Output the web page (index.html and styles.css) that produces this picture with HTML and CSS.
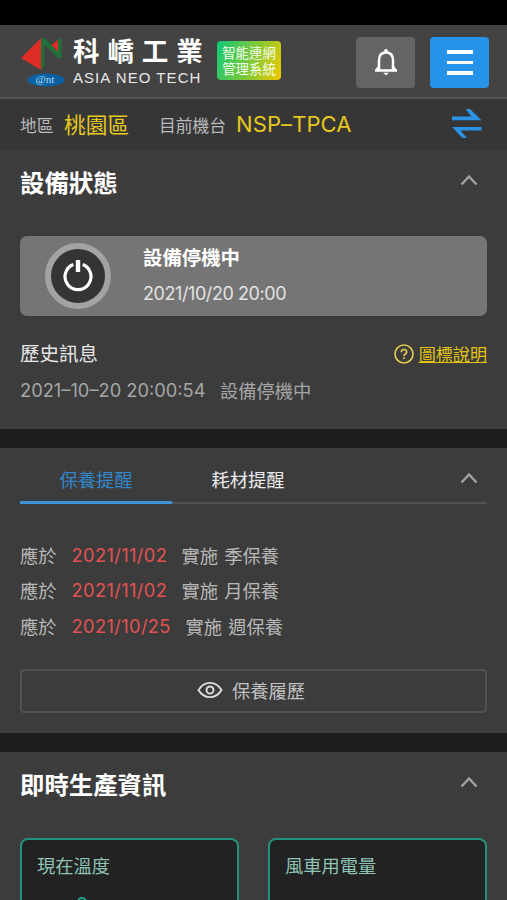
FILE: index.html
```html
<!DOCTYPE html>
<html lang="zh-Hant">
<head>
<meta charset="utf-8">
<meta name="viewport" content="width=device-width, initial-scale=1">
<title>科嶠工業 智能連網管理系統</title>
<link rel="stylesheet" href="styles.css">
</head>
<body>
<div class="status-bar"></div>
<header class="header">
  <svg class="logo" width="46" height="52" viewBox="0 0 46 52">
    <path d="M1 21 21 1v32z" fill="#dd2d27"/>
    <path d="M29 10 38 3v12.500z" fill="#dd2d27"/>
    <path d="M21 1.500h4L38 15V2h3.500v19H38L24.500 7.500V29L21 33z" fill="#20703a"/>
    <ellipse cx="26" cy="43" rx="18.500" ry="6.500" fill="#0862a5"/>
    <text class="logo-mark" x="15.500" y="46">@nt</text>
  </svg>
  <div class="brand">
    <div class="brand-zh">科嶠工業</div>
    <div class="brand-en">ASIA NEO TECH</div>
  </div>
  <div class="badge">智能連網<br>管理系統</div>
  <div class="actions">
    <button class="btn" aria-label="通知">
      <svg width="24" height="28" viewBox="0 0 24 28" fill="none" stroke="#fff" stroke-width="2.500">
        <path d="M1 22.500h22M5 22v-9.500C5 7.500 7.500 4.500 12 4.500s7 3 7 8V22M4.500 19l-2 3.500M19.500 19l2 3.500"/>
        <circle cx="12" cy="3" r="1.900" fill="#fff" stroke="none"/>
        <path d="M9.200 24.800h5.600L12 27.500z" fill="#fff" stroke="none"/>
      </svg>
    </button>
    <button class="btn btn-menu" aria-label="選單"><i></i><i></i><i></i></button>
  </div>
</header>
<div class="context">
  <span class="label">地區</span><span class="value area">桃園區</span>
  <span class="label machine-label">目前機台</span><span class="value machine">NSP–TPCA</span>
  <svg class="swap" width="32" height="30" viewBox="0 0 32 30" fill="#2a93e5">
    <path d="M2 7.500h19.500L15.500 0H20l11.500 11.200H2z"/>
    <path d="M2 18h29.500v3.500h-21l6.500 7.500h-4.500z"/>
  </svg>
</div>

<section class="panel panel-status">
  <div class="panel-head">
    <h2>設備狀態</h2>
    <svg class="chevron" width="18" height="12" viewBox="0 0 18 12"><path d="M1.500 10.500 9 2.500l7.500 8"/></svg>
  </div>
  <div class="state-card">
    <div class="power">
      <svg width="32" height="34" viewBox="0 0 32 34" fill="none" stroke="#fff">
        <path d="M11.300 6.600a13 13 0 1 0 9.400 0" stroke-width="3.200"/>
        <path d="M16 2v12" stroke-width="4.400"/>
      </svg>
    </div>
    <div class="state-text">
      <div class="state-name">設備停機中</div>
      <div class="state-time">2021/10/20 20:00</div>
    </div>
  </div>
  <div class="history-head">
    <span class="history-title">歷史訊息</span>
    <svg width="20" height="20" viewBox="0 0 20 20" fill="none" stroke="#dfcb4e" stroke-width="1.700">
      <circle cx="10" cy="10" r="9"/>
      <path d="M7.300 8.200C7.300 4.600 12.700 4.600 12.700 8c0 2-2.700 2-2.700 4"/>
      <path d="M10 13.200v1.800"/>
    </svg>
    <a class="legend">圖標說明</a>
  </div>
  <div class="history-row"><span class="history-time">2021–10–20 20:00:54</span><span class="history-msg">設備停機中</span></div>
</section>

<section class="panel panel-remind">
  <div class="tabs">
    <div class="tab tab-active">保養提醒</div>
    <div class="tab">耗材提醒</div>
    <svg class="chevron" width="18" height="12" viewBox="0 0 18 12"><path d="M1.500 10.500 9 2.500l7.500 8"/></svg>
  </div>
  <div class="rows">
    <div class="row"><span>應於</span><span class="date">2021/11/02</span><span class="task">實施</span><span>季保養</span></div>
    <div class="row"><span>應於</span><span class="date">2021/11/02</span><span class="task">實施</span><span>月保養</span></div>
    <div class="row"><span>應於</span><span class="date date-wide">2021/10/25</span><span class="task">實施</span><span>週保養</span></div>
  </div>
  <button class="log-btn">
    <svg width="26" height="18" viewBox="0 0 26 18" fill="none" stroke="#dcdcdc" stroke-width="1.900">
      <path d="M1.500 9C7-.500 19-.500 24.500 9 19 18.500 7 18.500 1.500 9z"/>
      <circle cx="13" cy="9" r="3.500"/>
    </svg>
    <span>保養履歷</span>
  </button>
</section>

<section class="panel panel-live">
  <div class="panel-head">
    <h2>即時生產資訊</h2>
    <svg class="chevron" width="18" height="12" viewBox="0 0 18 12"><path d="M1.500 10.500 9 2.500l7.500 8"/></svg>
  </div>
  <div class="cards">
    <div class="card"><span>現在溫度</span>
      <svg class="gauge" width="12" height="12" viewBox="0 0 12 12"><circle cx="6" cy="6" r="4" fill="none" stroke="#1aa88c" stroke-width="2"/></svg>
    </div>
    <div class="card"><span>風車用電量</span></div>
  </div>
</section>
</body>
</html>
```
FILE: styles.css
```css
* { box-sizing: border-box; }
html, body { height: 900px; overflow: hidden; }
body {
  margin: 0;
  background: #1d1d1d;
  color: #b9b9b9;
  font-family: Inter, "Noto Sans CJK TC", sans-serif;
  font-size: 18.3px;
  white-space: nowrap;
}
svg { display: block; flex: none; }
button { border: 0; padding: 0; font: inherit; color: inherit; }
.status-bar { height: 25px; background: #000; }
.header {
  height: 74px;
  display: flex;
  align-items: flex-start;
  padding: 12px 18px 0 20px;
  background: #434343;
  border-bottom: 2px solid #555;
}
.logo-mark { font: 11px "Liberation Serif", serif; fill: #b9d8ec; }
.brand { width: 133px; margin-left: 7px; color: #fff; }
.brand-zh {
  height: 31px;
  font-size: 26.5px;
  line-height: 29px;
  font-weight: 700;
  letter-spacing: 7.900px;
}
.brand-en {
  font: 15px/20px "Liberation Sans", sans-serif;
  letter-spacing: 1.05px;
  color: #e8e8e8;
}
.badge {
  width: 64px;
  height: 39px;
  margin: 4px 0 0 11px;
  padding-top: 5px;
  border-radius: 4px;
  background: linear-gradient(110deg, #12c878, #78c93c 50%, #f0c800);
  color: #f4ffe9;
  font-size: 13.4px;
  line-height: 15.5px;
  text-align: center;
}
.actions { display: flex; gap: 15px; margin-left: auto; }
.btn {
  width: 59px;
  height: 51px;
  border-radius: 4px;
  background: #646464;
  display: flex;
  align-items: center;
  justify-content: center;
}
.btn svg { margin-bottom: 2px; }
.btn-menu { background: #2693e9; flex-direction: column; gap: 7px; }
.btn-menu i { width: 26px; height: 3.500px; background: #fff; }
.context {
  height: 51px;
  display: flex;
  align-items: center;
  padding: 0 25px 2px 20px;
  background: #363636;
}
.label { width: 44px; font-size: 16.8px; padding-top: 2px; }
.machine-label { width: 77px; }
.value { color: #e6c71f; font-size: 21.7px; }
.area { width: 95px; }
.machine { font-size: 22px; letter-spacing: 0.1px; }
.swap { margin-left: auto; }
.panel { background: #3c3c3c; padding: 0 20px; }
.panel-status { height: 279px; margin-bottom: 19px; }
.panel-head { height: 86px; display: flex; justify-content: space-between; padding-right: 9px; }
h2 { margin: 15px 0 0; color: #fff; font-size: 24.4px; line-height: 36px; font-weight: 700; }
.chevron { fill: none; stroke: #a0a0a0; stroke-width: 2.500; margin-top: 24px; }
.state-card {
  height: 80px;
  display: flex;
  padding-left: 25px;
  align-items: center;
  border-radius: 7px;
  background: #757575;
}
.power {
  width: 66px;
  height: 66px;
  border: 6px solid #a3a3a3;
  border-radius: 50%;
  background: #343434;
  display: flex;
  align-items: center;
  justify-content: center;
}
.power svg { margin-bottom: 3px; }
.state-text { margin-left: 32px; }
.state-name { color: #fff; font-size: 19.4px; line-height: 30px; font-weight: 700; }
.state-time { color: #e2e2e2; font-size: 18px; line-height: 30px; margin-top: 6px; letter-spacing: -0.42px; }
.history-head { height: 37px; margin-top: 19px; display: flex; align-items: center; }
.history-title { color: #e6e6e6; font-size: 19.5px; margin: 0 auto 2px 0; }
.legend { margin-left: 5px; color: #e2c310; font-size: 17.100px; text-decoration: underline; }
.history-row { height: 36px; display: flex; align-items: center; color: #a5a5a5; }
.history-time { width: 200px; }
.panel-remind { height: 285px; margin-bottom: 19px; }
.tabs { height: 56px; display: flex; border-bottom: 2px solid #525252; padding-right: 9px; }
.tab { width: 152px; height: 56px; line-height: 65px; text-align: center; color: #ececec; }
.tab-active { color: #3287cd; border-bottom: 3px solid #3c91d7; }
.tabs .chevron { margin-left: auto; }
.rows { margin-top: 33px; }
.row { height: 35.500px; display: flex; align-items: center; }
.date { width: 95px; margin-left: 15px; color: #e25252; letter-spacing: 0.36px; }
.date-wide { width: 99px; }
.task { margin: 0 6px 0 15px; }
.log-btn {
  width: 467px;
  height: 44px;
  margin-top: 25px;
  padding: 0 5px 2px 0;
  display: flex;
  gap: 9px;
  align-items: center;
  justify-content: center;
  background: transparent;
  border: 2px solid #515151;
  border-radius: 4px;
  color: #c2c2c2;
}
.panel-live { height: 148px; overflow: hidden; }
.cards { display: grid; grid-template-columns: 219px 219px; gap: 29px; }
.card {
  height: 150px;
  padding: 12px 15px;
  border: 2px solid #22927f;
  border-radius: 8px;
  background: #222;
  color: #8fc4b5;
  line-height: 28px;
}
.gauge { margin: 16px 0 0 39px; }
```
